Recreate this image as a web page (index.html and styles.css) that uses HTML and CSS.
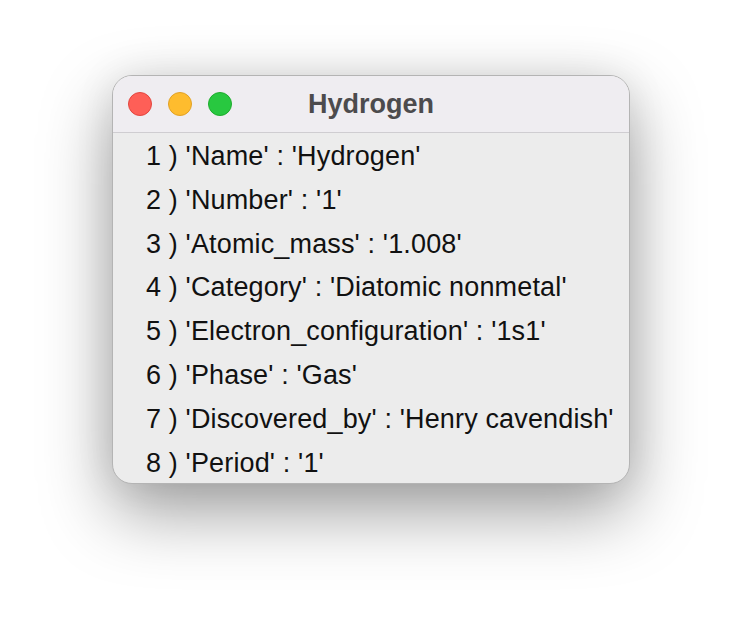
FILE: index.html
```html
<!DOCTYPE html>
<html>
<head>
<meta charset="utf-8">
<link rel="stylesheet" href="styles.css">
</head>
<body>
<div class="window">
  <div class="titlebar">
    <div class="lights">
      <span class="light red"></span>
      <span class="light yellow"></span>
      <span class="light green"></span>
    </div>
    <div class="title">Hydrogen</div>
  </div>
  <div class="content">
    <div class="row">1 ) 'Name' : 'Hydrogen'</div>
    <div class="row">2 ) 'Number' : '1'</div>
    <div class="row">3 ) 'Atomic_mass' : '1.008'</div>
    <div class="row">4 ) 'Category' : 'Diatomic nonmetal'</div>
    <div class="row">5 ) 'Electron_configuration' : '1s1'</div>
    <div class="row">6 ) 'Phase' : 'Gas'</div>
    <div class="row">7 ) 'Discovered_by' : 'Henry cavendish'</div>
    <div class="row">8 ) 'Period' : '1'</div>
  </div>
</div>
</body>
</html>
```
FILE: styles.css
```css
html, body {
  margin: 0;
  padding: 0;
  background: #ffffff;
}
body {
  width: 742px;
  height: 632px;
  overflow: hidden;
  font-family: "Liberation Sans", Arial, sans-serif;
}
.window {
  margin: 75px 0 0 112px;
  width: 518px;
  height: 409px;
  box-sizing: border-box;
  border-radius: 20px;
  background: #ececec;
  border: 1px solid #b4b4b4;
  box-shadow: 0 28px 70px rgba(0, 0, 0, 0.38), 0 0 40px rgba(0, 0, 0, 0.08);
  overflow: hidden;
  display: flex;
  flex-direction: column;
}
.titlebar {
  height: 56px;
  flex: none;
  background: #efedf1;
  border-bottom: 1px solid #cfcdd1;
  display: flex;
  align-items: center;
  position: relative;
}
.lights {
  display: flex;
  gap: 16px;
  padding-left: 15px;
}
.light {
  width: 22px;
  height: 22px;
  border-radius: 50%;
  border: 1px solid transparent;
}
.red { background: #fe5f57; border-color: #e2463f; }
.yellow { background: #febc2e; border-color: #e1a126; }
.green { background: #28c840; border-color: #1eac2d; }
.title {
  position: absolute;
  left: 0;
  right: 0;
  top: 0;
  bottom: 0;
  display: flex;
  align-items: center;
  justify-content: center;
  font-weight: bold;
  font-size: 27px;
  color: #4c4b4d;
  pointer-events: none;
}
.content {
  padding: 2px 0 0 33px;
}
.row {
  height: 43.8px;
  line-height: 43.8px;
  font-size: 27px;
  letter-spacing: 0.15px;
  color: #111111;
  white-space: nowrap;
}
```
